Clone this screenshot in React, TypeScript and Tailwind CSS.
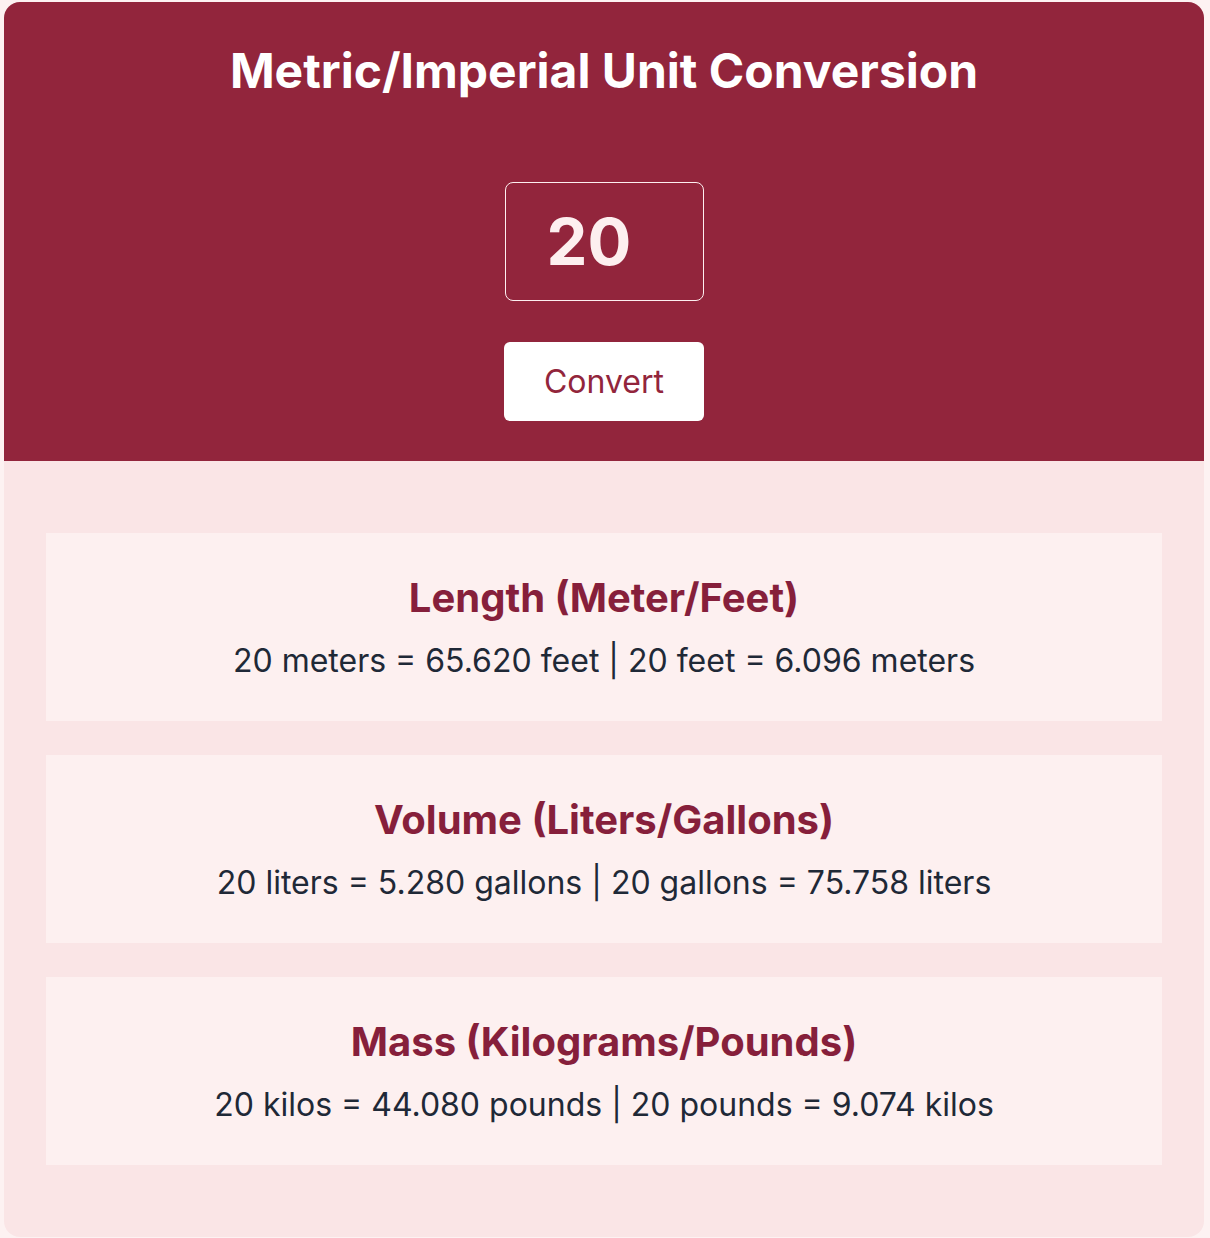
import { useState } from "react";

const conversions = (n: number) => [
  {
    title: "Length (Meter/Feet)",
    text: `${n} meters = ${(n * 3.281).toFixed(3)} feet | ${n} feet = ${(n / 3.281).toFixed(3)} meters`,
  },
  {
    title: "Volume (Liters/Gallons)",
    text: `${n} liters = ${(n * 0.264).toFixed(3)} gallons | ${n} gallons = ${(n / 0.264).toFixed(3)} liters`,
  },
  {
    title: "Mass (Kilograms/Pounds)",
    text: `${n} kilos = ${(n * 2.204).toFixed(3)} pounds | ${n} pounds = ${(n / 2.204).toFixed(3)} kilos`,
  },
];

export default function App() {
  const [value, setValue] = useState("20");
  const [amount, setAmount] = useState(20);

  return (
    <div className="min-h-screen bg-[#fdf2f2] pt-[2px] font-['Inter','Noto_Sans',sans-serif]">
      <div className="ml-1 w-[1200px] overflow-hidden rounded-2xl bg-[#fae5e6]">
        {/* Header */}
        <div className="flex flex-col items-center bg-[#92253c] pt-[45px] pb-[40px]">
          <h1 className="text-5xl leading-none font-bold text-white">
            Metric/Imperial Unit Conversion
          </h1>
          <input
            value={value}
            onChange={(e) => setValue(e.target.value)}
            className="mt-[87px] h-[119px] w-[199px] rounded-lg border border-[#fdeff0] bg-transparent pl-[41px] text-[65px] font-bold text-[#fdefef] outline-none"
          />
          <button
            onClick={() => setAmount(Number(value) || 0)}
            className="mt-[41px] h-[79px] w-[200px] rounded-md bg-white text-[32px] text-[#92253c]"
          >
            Convert
          </button>
        </div>

        {/* Results */}
        <div className="flex flex-col gap-[34px] px-[42px] py-[72px]">
          {conversions(amount).map((c) => (
            <div
              key={c.title}
              className="flex h-[188px] flex-col items-center justify-center bg-[#fdf0f0]"
            >
              <h2 className="text-[40px] leading-[48px] font-bold text-[#861f3b]">
                {c.title}
              </h2>
              <p className="mt-[19px] text-[32px] leading-[40px] text-[#1f2937]">
                {c.text}
              </p>
            </div>
          ))}
        </div>
      </div>
    </div>
  );
}
